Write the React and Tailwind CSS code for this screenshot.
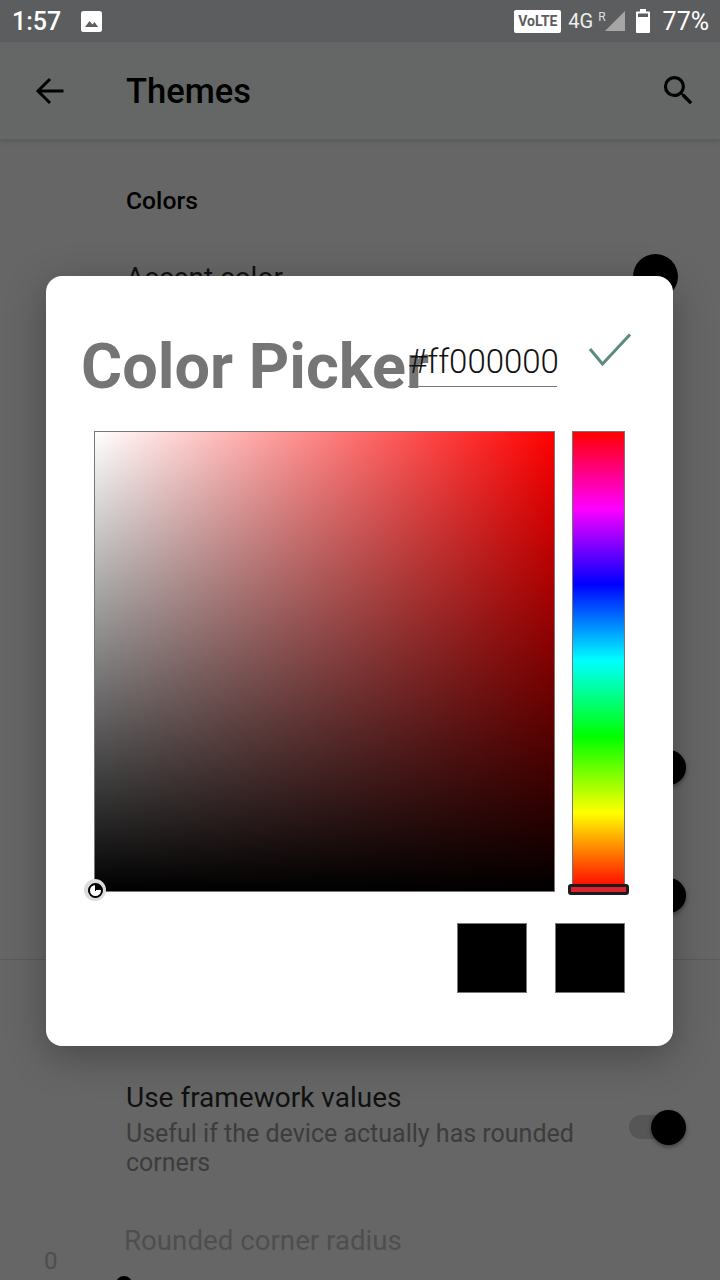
import React from "react";

const roboto = { fontFamily: "Roboto, sans-serif" };

const Toggle = ({ className = "" }) => (
  <div className={`relative h-[24px] w-[51px] rounded-full bg-[#565656] ${className}`}>
    <div className="absolute left-[22px] top-[-5px] h-[35px] w-[35px] rounded-full bg-black shadow-[0_2px_4px_rgba(0,0,0,0.4)]" />
  </div>
);

const StatusBar = () => (
  <div className="flex h-[42px] items-center justify-between bg-[#5c5d5f] pl-[12px] pr-[11px] text-white">
    <div className="flex items-center">
      <span className="text-[25px] font-medium leading-none">1:57</span>
      <svg width="21" height="21" viewBox="0 0 21 21" className="ml-[20px]">
        <rect width="21" height="21" rx="2.5" fill="#fff" />
        <path d="M4 16 L8.5 10 L11.5 13.5 L13.5 11 L17 16 Z" fill="#5c5d5f" />
      </svg>
    </div>
    <div className="flex items-center">
      <div className="flex h-[23px] w-[47px] items-center justify-center rounded-[2px] bg-white text-[14px] font-bold leading-none text-[#5c5d5f]">
        VoLTE
      </div>
      <span className="ml-[7px] text-[20px] leading-none text-[#eeeeee]">4G</span>
      <span className="ml-[5px] mb-[8px] text-[12px] leading-none text-[#dddddd]">R</span>
      <svg width="20" height="20" viewBox="0 0 20 20" className="ml-[-1px]">
        <path d="M0 20 L20 0 V20 Z" fill="#a6a6a6" />
      </svg>
      <svg width="14" height="24" viewBox="0 0 14 24" className="ml-[11px]">
        <path d="M4 0 H10 V2.5 H13 Q14 2.5 14 3.5 V23 Q14 24 13 24 H1 Q0 24 0 23 V3.5 Q0 2.5 1 2.5 H4 Z" fill="#fff" />
        <rect x="2" y="4.5" width="10" height="3.5" fill="#5c5d5f" />
      </svg>
      <span className="ml-[13px] text-[25px] font-normal leading-none">77%</span>
    </div>
  </div>
);

const Toolbar = () => (
  <div className="flex h-[98px] items-center border-b border-[#5e5f5f] bg-[#656766] shadow-[0_2px_4px_rgba(0,0,0,0.12)]">
    <svg width="36" height="36" viewBox="0 0 24 24" className="ml-[32px]" fill="none" stroke="#000" strokeWidth="2">
      <path d="M21 12 H4.5 M12 4 L4 12 L12 20" />
    </svg>
    <span className="ml-[58px] mt-[2px] text-[34.5px] font-medium leading-none text-black">Themes</span>
    <svg width="39" height="39" viewBox="0 0 24 24" className="ml-auto mr-[22px]" fill="#000">
      <path d="M15.5 14h-.79l-.28-.27A6.47 6.47 0 0 0 16 9.5 6.5 6.5 0 1 0 9.5 16c1.61 0 3.09-.59 4.23-1.57l.27.28v.79l5 4.99L20.49 19l-4.99-5zm-6 0C7.01 14 5 11.99 5 9.5S7.01 5 9.5 5 14 7.01 14 9.5 11.99 14 9.5 14z" />
    </svg>
  </div>
);

const ColorPicker = () => (
  <div className="absolute left-[46px] top-[276px] h-[770px] w-[627px] rounded-[16px] bg-white shadow-[0_10px_40px_rgba(0,0,0,0.3)]">
    <div className="flex h-[155px] items-start">
      <span className="ml-[35px] mt-[56px] w-[327px] whitespace-nowrap text-[63px] font-bold leading-[70px] text-[#757575]">
        Color Picker
      </span>
      <div className="relative mt-[66px] h-[45px] w-[149px] whitespace-nowrap border-b border-[#777777] text-right text-[33px] font-light leading-[40px] text-[#111111]">
        #ff000000
      </div>
      <svg width="44" height="34" viewBox="0 0 44 34" className="ml-[31px] mt-[57px]" fill="none" stroke="#5a8a80" strokeWidth="3">
        <path d="M2 16 L14.5 31 L42 1.5" />
      </svg>
    </div>
    <div className="flex items-start pl-[48px]">
      <div className="relative h-[461px] w-[461px] border border-[#777777] bg-[linear-gradient(to_right,#ffffff,#ff0000)]">
        <div className="h-full w-full bg-[linear-gradient(to_bottom,rgba(0,0,0,0),#000000)]" />
        <div className="absolute bottom-[-10px] left-[-11px] flex h-[22px] w-[22px] items-center justify-center rounded-full bg-[#dcdcdc]">
          <div className="h-[15px] w-[15px] rounded-full border-[2px] border-black bg-[conic-gradient(#000_0_25%,#fff_25%_100%)]" />
        </div>
      </div>
      <div className="relative ml-[17px] h-[459px] w-[53px] border border-[#777777] bg-[linear-gradient(to_bottom,#ff0000,#ff00ff,#0000ff,#00ffff,#00ff00,#ffff00,#ff0000)]">
        <div className="absolute bottom-[-6px] left-[-5px] h-[11px] w-[61px] rounded-[3px] border-[3px] border-[#1c1c20] bg-[#d8242a]" />
      </div>
    </div>
    <div className="mt-[31px] flex justify-end gap-[28px] pr-[48px]">
      <div className="h-[70px] w-[70px] border border-[#777777] bg-black" />
      <div className="h-[70px] w-[70px] border border-[#777777] bg-black" />
    </div>
  </div>
);

export default function App() {
  return (
    <div className="relative h-[1280px] w-[720px] overflow-hidden bg-[#666666]" style={roboto}>
      <StatusBar />
      <Toolbar />
      <div className="pl-[126px]">
        <div className="mt-[46px] text-[24.7px] font-medium leading-[30px] text-black">Colors</div>
        <div className="mt-[47px] flex h-[30px] items-center justify-between pr-[42px]">
          <span className="text-[28px] leading-[30px] text-[#111111]">Accent color</span>
          <div className="mb-[4px] h-[45px] w-[45px] shrink-0 rounded-full bg-black" />
        </div>
        <Toggle className="ml-[503px] mt-[462px]" />
        <Toggle className="ml-[503px] mt-[104px]" />
      </div>
      <div className="mt-[52px] h-px bg-[#5a5a5a]" />
      <div className="pl-[126px]">
        <div className="mt-[122px] flex items-center pr-[40px]">
          <div className="w-[463px] shrink-0">
            <div className="text-[28px] leading-[32px] text-[#111111]">Use framework values</div>
            <div className="mt-[5px] text-[25px] leading-[29px] text-[#3c3c3c]">
              Useful if the device actually has rounded corners
            </div>
          </div>
          <Toggle className="mb-[5px] ml-[40px]" />
        </div>
        <div className="ml-[-2px] mt-[47px] text-[27.7px] leading-[34px] text-[#4e4e4e]">Rounded corner radius</div>
      </div>
      <div className="ml-[44px] mt-[-11px] text-[24px] leading-[28px] text-[#4e4e4e]">0</div>
      <div className="ml-[116px] mt-[1px] h-[16px] w-[16px] rounded-full bg-black" />
      <ColorPicker />
    </div>
  );
}
